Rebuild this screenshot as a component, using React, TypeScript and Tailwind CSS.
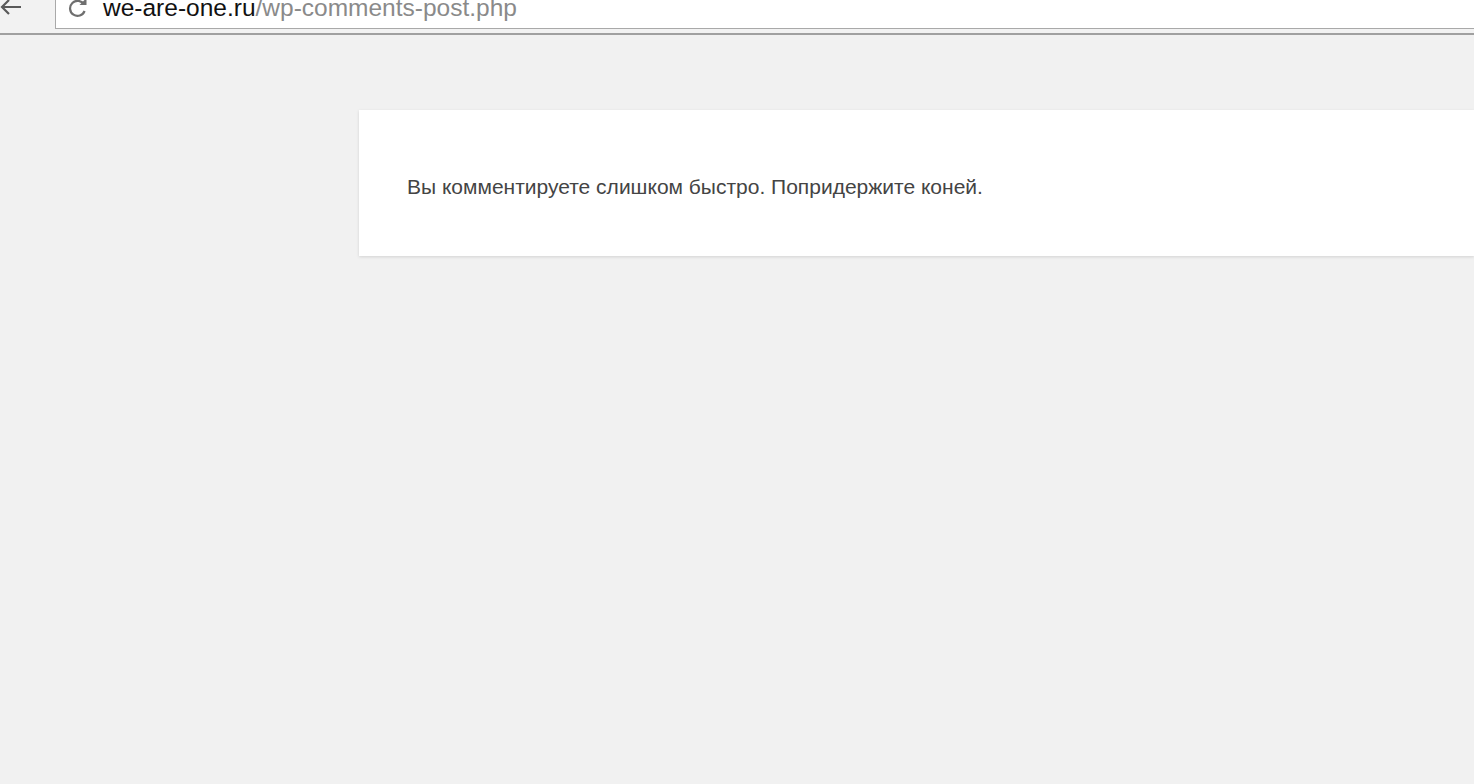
export default function App() {
  return (
    <div className="flex flex-col w-full h-[784px] bg-[#f1f1f1] overflow-hidden font-['Liberation_Sans',Arial,sans-serif]">
      {/* Browser bar */}
      <div className="flex items-start h-[35px] bg-[#f2f2f2] border-b-2 border-[#a0a0a0] shrink-0">
        <div className="w-[55px] h-[28px] flex items-start">
          <svg width="24" height="20" viewBox="0 0 24 20" className="-mt-[1px] -ml-[1px]">
            <path d="M22 8H3M10 1L3 8L10 15" stroke="#5a5a5a" strokeWidth="2.2" fill="none" />
          </svg>
        </div>
        <div className="flex items-start flex-1 h-[35px] bg-white border-l border-b border-[#a9a9a9] -mt-[6px] pl-[10px]">
          <svg width="24" height="24" viewBox="0 0 24 24" className="mt-[2px]">
            <path d="M18 8.5A7.5 7.5 0 1 0 18.6 15" stroke="#6f6f6f" strokeWidth="2.2" fill="none" />
            <path d="M13.5 9L20.5 9L20.5 2Z" fill="#6f6f6f" />
          </svg>
          <span className="ml-[13px] text-[24.5px] leading-none text-[#111] mt-[2px] whitespace-nowrap">
            we-are-one.ru<span className="text-[#8a8a8a]">/wp-comments-post.php</span>
          </span>
        </div>
      </div>

      {/* Content */}
      <div className="pl-[359px] pt-[75px]">
        <div className="bg-white h-[146px] pl-[48px] pt-[65px] shadow-[0_1px_3px_rgba(0,0,0,0.13)]">
          <p className="text-[21px] leading-[24px] text-[#444]">
            Вы комментируете слишком быстро. Попридержите коней.
          </p>
        </div>
      </div>
    </div>
  );
}
